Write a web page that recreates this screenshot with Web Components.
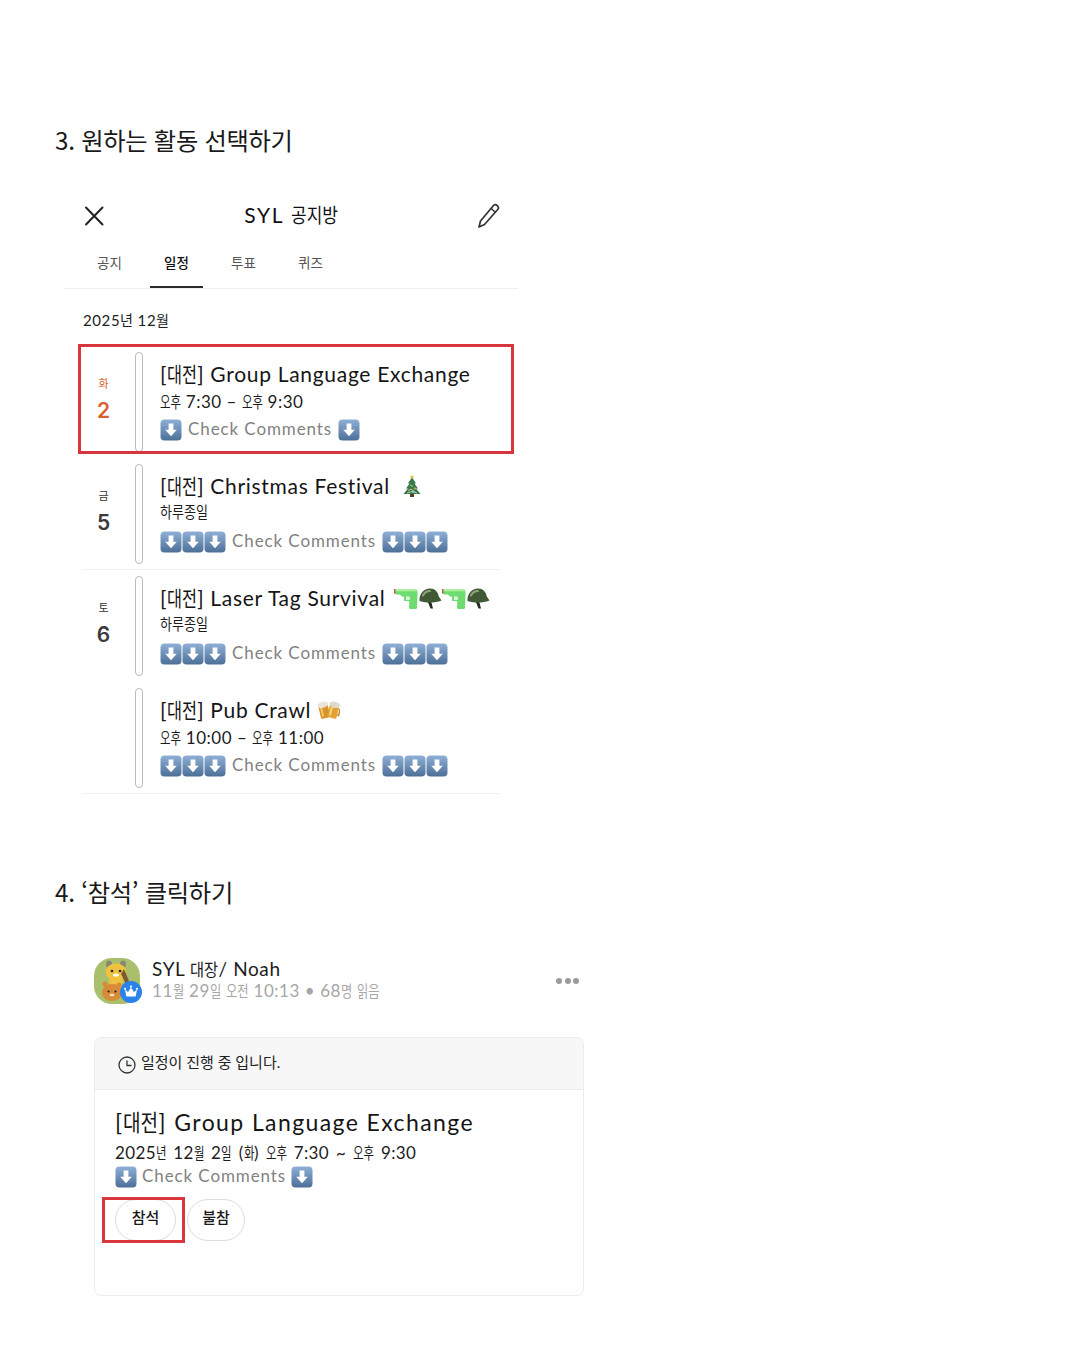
<!DOCTYPE html>
<html lang="ko">
<head>
<meta charset="utf-8">
<title>SYL</title>
<style>
  html, body { margin: 0; background: #fff; }
  body { font-family: "Noto Sans CJK KR", "Noto Sans", sans-serif; color: #111; }
  main { display: block; padding-top: 126px; height: 1224px; overflow: hidden; }
</style>
</head>
<body>
<main>
  <syl-heading>3. 원하는 활동 선택하기</syl-heading>
  <syl-screen title="SYL 공지방" month="2025년 12월">
    <syl-event weekday="화" day="2" accent highlight name="[대전] Group Language Exchange" time="오후 7:30 – 오후 9:30" arrows="1" divider="0"></syl-event>
    <syl-event weekday="금" day="5" name="[대전] Christmas Festival" icons="tree" icon-gap="11" time="하루종일" arrows="3" divider="1"></syl-event>
    <syl-event weekday="토" day="6" name="[대전] Laser Tag Survival" icons="gun,helmet,gun,helmet" icon-gap="9" time="하루종일" arrows="3" divider="0"></syl-event>
    <syl-event name="[대전] Pub Crawl" icons="beer" icon-gap="7" time="오후 10:00 – 오후 11:00" arrows="3" divider="1"></syl-event>
  </syl-screen>
  <syl-heading style="margin-top:84px">4. ‘참석’ 클릭하기</syl-heading>
  <syl-post author="SYL 대장/ Noah" meta="11월 29일 오전 10:13 • 68명 읽음">
    <syl-schedule-card status="일정이 진행 중 입니다." name="[대전] Group Language Exchange" when="2025년 12월 2일 (화) 오후 7:30 ~ 오후 9:30"></syl-schedule-card>
  </syl-post>
</main>

<script>
// the original's hand-drawn hangul is tall and narrow, so squeeze each run
function hg(text, scale, size) {
  return text.replace(/[가-힣]+/g, m =>
    `<span style="display:inline-block;font-size:${size}px;letter-spacing:0;transform:scaleX(${scale});transform-origin:0 50%;margin-right:${(-(1 - scale) * .92 * m.length).toFixed(3)}em">${m}</span>`);
}

// emoji drawn by hand, the sandbox has no colour emoji font
const EMOJI = {
  arrow: `<svg viewBox="0 0 22 22" width="22" height="22"><defs><linearGradient id="a" x1="0" y1="0" x2="0" y2="1"><stop offset="0" stop-color="#8fb0d6"/><stop offset="1" stop-color="#4c6f98"/></linearGradient></defs><rect x=".5" y=".5" width="21" height="21" rx="4" fill="url(#a)"/><path d="M8.600 4.500h4.800v6.200h3.400L11 17.200 5.200 10.700h3.400z" fill="#fff"/></svg>`,
  tree: `<svg viewBox="0 0 22 24" width="22" height="24"><rect x="9" y="19" width="4" height="4" fill="#5b3d22"/><path d="M11 3 15 9.500h-1.600L17 14.500h-2L19.500 20h-17L7 14.500H5L8.600 9.500H7z" fill="#3a7a48"/><path d="M7 17l3-2 4 3M9 11l3 1.500M6 19l5-1.500 5 1.500" stroke="#a9d0ac" fill="none"/><circle cx="11" cy="2.800" r="1.600" fill="#e7c64a"/><circle cx="8" cy="16" r=".9" fill="#e86a5c"/><circle cx="14" cy="14.500" r=".9" fill="#e7c64a"/><circle cx="12" cy="18" r=".9" fill="#8ec6e8"/></svg>`,
  gun: `<svg viewBox="0 0 24 24" width="24" height="24"><rect x="0" y="3" width="2" height="4.500" fill="#b5583a"/><path d="M1.500 3H21c1.800 0 2.500 1 2.500 2.500v2.500l-.5 13.500c0 .8-.5 1.500-1.500 1.500h-5c-1 0-1.500-.7-1.500-1.500l.3-6.500h-4c-1 0-1.500-.8-1.500-1.800V10.500H8L6 8.500H1.500z" fill="#6fdc6f"/><path d="M1.500 3H21c1.500 0 2.300.8 2.500 2.200H1.500z" fill="#aaf0a0"/><path d="M12 10.500h3.800V14H12z" fill="#fff" opacity=".75"/></svg>`,
  helmet: `<svg viewBox="0 0 24 24" width="24" height="24"><path d="M9.500 15l3 7.500h2.500L13 15z" fill="#26261f"/><path d="M1.500 15C1 7.500 6 2.500 12 2.500c5 0 8 3.500 8.800 8l2.700 4c-6.500 2.500-14 2.800-22 .5z" fill="#3f5a34"/><path d="M5 9.500c1.500-3 4-4.500 7-4.500" stroke="#8ea37a" stroke-width="2" fill="none" stroke-linecap="round"/></svg>`,
  beer: `<svg viewBox="0 0 22 22" width="22" height="22"><g transform="rotate(-14 7 12)"><rect x="1.500" y="6" width="9.500" height="13" rx="1.500" fill="#d9932b"/><rect x="3" y="8" width="2" height="9" fill="#f4c96a"/><ellipse cx="6.200" cy="5.500" rx="5.500" ry="3" fill="#e9e4d8"/></g><g transform="rotate(14 15 12)"><rect x="10.500" y="6" width="9.500" height="13" rx="1.500" fill="#e3a233"/><rect x="12" y="8" width="2" height="9" fill="#f8d680"/><path d="M20 9h1.500v6H20" fill="none" stroke="#c98a2a" stroke-width="1.500"/><ellipse cx="15.200" cy="5.500" rx="5.500" ry="3" fill="#e0dacb"/></g></svg>`
};

class SylHeading extends HTMLElement {
  connectedCallback() {
    this.attachShadow({ mode: 'open' }).innerHTML = `
      <style>
        :host { display: block; padding: 0 0 2px 55px; font-size: 24.3px; line-height: 28px; color: #1a1a1a; letter-spacing: -.3px; }
      </style><slot></slot>`;
  }
}

class SylEmoji extends HTMLElement {
  connectedCallback() {
    const name = this.getAttribute('name') || 'arrow';
    this.attachShadow({ mode: 'open' }).innerHTML = `
      <style>:host { display: inline-flex; flex: none; } svg { display: block; }</style>${EMOJI[name]}`;
  }
}

// row of down arrows with "Check Comments" between them
class SylComments extends HTMLElement {
  connectedCallback() {
    const n = +this.getAttribute('count') || 1;
    const arrows = '<syl-emoji name="arrow"></syl-emoji>'.repeat(n);
    this.attachShadow({ mode: 'open' }).innerHTML = `
      <style>
        :host { display: flex; align-items: center; height: 22px; }
        .text { margin: -2px 6px 0 6px; font: 400 17px/22px Lato, "Noto Sans", sans-serif; color: #828282; width: 144px; white-space: nowrap; letter-spacing: .9px; }
        :host([tight]) .text { margin-left: 5px; margin-right: 5px; }
      </style>${arrows}<span class="text">Check Comments</span>${arrows}`;
  }
}

class SylScreen extends HTMLElement {
  connectedCallback() {
    const title = this.getAttribute('title');
    const month = this.getAttribute('month');
    const tabs = ['공지', '일정', '투표', '퀴즈'];
    this.attachShadow({ mode: 'open' }).innerHTML = `
      <style>
        :host { display: block; margin: 41px 0 0 64px; width: 454px; }
        header { height: 38px; display: flex; align-items: center; justify-content: space-between; padding: 0 17px 0 20px; position: relative; }
        header svg { display: block; }
        h1 { position: absolute; left: 0; right: 0; top: 0; margin: 0; text-align: center; font: 400 21px/35px Lato, "Noto Sans CJK KR", sans-serif; color: #111; letter-spacing: 1.7px; }
        nav { display: flex; height: 53px; padding-left: 12px; border-bottom: 1px solid #eee; }
        nav span { width: 67px; text-align: center; font-size: 13.5px; line-height: 54px; color: #555; position: relative; }
        nav span.on { color: #111; font-weight: 500; }
        nav span.on::after { content: ''; position: absolute; left: 7px; right: 7px; bottom: 0; height: 2px; background: #2a2a2a; }
        .month { height: 57px; padding-left: 19px; font: 400 15px/62px Lato, "Noto Sans CJK KR", sans-serif; letter-spacing: .6px; color: #222; }
        .rows { margin-left: 18px; width: 418px; }
      </style>
      <header>
        <svg width="20" height="20" viewBox="0 0 20 20"><path d="M2 1.500 18.500 18.500M18.500 1.500 2 18.500" stroke="#222" stroke-width="2" stroke-linecap="round"/></svg>
        <h1>${hg(title, .85, 20)}</h1>
        <svg width="24" height="26" viewBox="0 0 24 26"><path d="M16.500 2.500c1-1 2.500-1 3.800.200 1.300 1.300 1.400 2.800.400 3.800L7.500 21.500 2 24l1.500-6z" fill="none" stroke="#333" stroke-width="1.700" stroke-linejoin="round"/><path d="M14 5.200l4.500 4.300" stroke="#333" stroke-width="1.400"/></svg>
      </header>
      <nav>${tabs.map((t, i) => `<span class="${i === 1 ? 'on' : ''}">${t}</span>`).join('')}</nav>
      <div class="month">${hg(month, .97, 14.5)}</div>
      <div class="rows"><slot></slot></div>`;
  }
}

class SylEvent extends HTMLElement {
  connectedCallback() {
    const get = n => this.getAttribute(n) || '';
    const icons = get('icons') ? get('icons').split(',') : [];
    const iconHtml = icons.map(n => `<syl-emoji name="${n}"></syl-emoji>`).join('');
    const time = get('time');
    const hasClock = /\d/.test(time);
    this.attachShadow({ mode: 'open' }).innerHTML = `
      <style>
        :host { display: flex; height: 112px; box-sizing: border-box; position: relative; }
        :host([divider="1"]) { border-bottom: 1px solid #f0f0f0; }
        .date { width: 43px; margin-top: 30px; text-align: center; }
        .wd { font-size: 11px; line-height: 14px; color: #333; }
        .num { font: 600 21px/26px Inter, "Liberation Sans", sans-serif; color: #3a3a3a; margin-top: 8px; }
        :host([accent]) .wd, :host([accent]) .num { color: #d9622f; }
        .bar { width: 6px; height: 98px; margin: 6px 17px 0 10px; border: 1px solid #b9b9b9; border-radius: 4px; background: #fff; flex: none; }
        .body { padding-top: 14px; min-width: 0; }
        .name { display: flex; align-items: center; height: 28px; font: 400 21px/28px Lato, "Noto Sans CJK KR", sans-serif; color: #151515; letter-spacing: .7px; white-space: pre; }
        .icons { display: flex; margin-left: ${get('icon-gap') || 8}px; }
        .time { margin: 3px 0 0; font: 400 17px/22px Lato, "Noto Sans CJK KR", sans-serif; letter-spacing: .5px; color: #1c1c1c; }
        .time.allday { margin-top: 1px; padding-bottom: 2px; }
        syl-comments { margin-top: 6px; }
        .box { position: absolute; left: -4px; top: -2px; width: 436px; height: 110px; box-sizing: border-box; border: 3px solid #d8353c; display: none; pointer-events: none; }
        :host([highlight]) .box { display: block; }
      </style>
      <div class="date"><div class="wd">${get('weekday')}</div><div class="num">${get('day')}</div></div>
      <div class="bar"></div>
      <div class="body">
        <div class="name"><span>${hg(get('name'), .776, 21)}</span>${icons.length ? `<span class="icons">${iconHtml}</span>` : ''}</div>
        <div class="time ${hasClock ? '' : 'allday'}">${hg(time, hasClock ? .736 : .84, 15.5)}</div>
        <syl-comments count="${get('arrows')}"></syl-comments>
      </div>
      <div class="box"></div>`;
  }
}

class SylPost extends HTMLElement {
  connectedCallback() {
    this.attachShadow({ mode: 'open' }).innerHTML = `
      <style>
        :host { display: block; margin: 50px 0 0 94px; width: 490px; }
        .top { display: flex; height: 46px; position: relative; }
        .avatar { width: 46px; height: 46px; flex: none; position: relative; margin-right: 12px; }
        svg { display: block; }
        .badge { position: absolute; left: 26px; top: 23px; }
        .who { font: 400 19px/22px Lato, "Noto Sans CJK KR", sans-serif; letter-spacing: .6px; color: #1c1c1c; }
        .meta { font: 400 17px/22px Lato, "Noto Sans CJK KR", sans-serif; letter-spacing: .55px; color: #a6a6a6; margin-top: -1px; }
        .dots { margin-left: auto; margin-right: 5px; align-self: center; display: flex; gap: 2.500px; }
        .dots i { width: 6px; height: 6px; border-radius: 50%; background: #9b9b9b; }
        .slot { display: block; margin-top: 33px; }
      </style>
      <div class="top">
        <div class="avatar">
          <svg width="46" height="46" viewBox="0 0 46 46">
            <rect width="46" height="46" rx="18" fill="#a9bf6c"/>
            <ellipse cx="15" cy="6" rx="3" ry="3.500" fill="#8a8672"/><ellipse cx="29" cy="6" rx="3" ry="3.500" fill="#8a8672"/>
            <ellipse cx="22" cy="14" rx="10.500" ry="8.500" fill="#efc33f"/>
            <path d="M15 21c3-2 11-2 14 1l-2 9H16z" fill="#efc33f"/>
            <path d="M30 11l5 12-3 3-5-10z" fill="#7b5a34"/>
            <circle cx="18" cy="13" r="1.300" fill="#222"/><circle cx="26" cy="13" r="1.300" fill="#222"/>
            <ellipse cx="22" cy="17" rx="3" ry="1.600" fill="#fff"/>
            <circle cx="11" cy="26" r="2.500" fill="#d88a37"/><circle cx="25" cy="27" r="2.500" fill="#d88a37"/>
            <ellipse cx="18" cy="34.500" rx="10" ry="8.500" fill="#d88a37"/>
            <circle cx="14.500" cy="33.500" r="1.100" fill="#222"/><circle cx="21.500" cy="33.500" r="1.100" fill="#222"/>
            <ellipse cx="18" cy="37" rx="2.500" ry="1.300" fill="#efe2c4"/>
          </svg>
          <svg class="badge" width="22" height="22" viewBox="0 0 22 22">
            <circle cx="11" cy="11" r="11" fill="#2b82ea"/>
            <path d="M5 8.500l3 2.500 3-4.500 3 4.500 3-2.500-1.300 7H6.300z" fill="#fff"/>
            <circle cx="5" cy="7.800" r="1.100" fill="#fff"/><circle cx="11" cy="5.600" r="1.100" fill="#fff"/><circle cx="17" cy="7.800" r="1.100" fill="#fff"/>
          </svg>
        </div>
        <div>
          <div class="who">${hg(this.getAttribute('author'), .9, 17)}</div>
          <div class="meta">${hg(this.getAttribute('meta'), .79, 15.5)}</div>
        </div>
        <div class="dots"><i></i><i></i><i></i></div>
      </div>
      <slot class="slot"></slot>`;
  }
}

class SylScheduleCard extends HTMLElement {
  connectedCallback() {
    this.attachShadow({ mode: 'open' }).innerHTML = `
      <style>
        :host { display: block; height: 259px; box-sizing: border-box; border: 1px solid #ececec; border-radius: 7px; overflow: hidden; }
        .status { height: 51px; background: #f7f7f7; border-bottom: 1px solid #eee; display: flex; align-items: center; padding-left: 23px; font: 400 15px/20px Lato, "Noto Sans CJK KR", sans-serif; color: #222; }
        .status svg { margin: 2px 5px 0 0; display: block; }
        .status span { margin-top: -3px; }
        .body { padding: 18px 0 0 20px; position: relative; }
        .name { font: 400 23px/28px Lato, "Noto Sans CJK KR", sans-serif; letter-spacing: 1.4px; color: #151515; white-space: pre; margin-bottom: 2px; }
        .when { margin-top: 6px; font: 400 17px/22px Lato, "Noto Sans CJK KR", sans-serif; letter-spacing: .35px; word-spacing: 2.2px; color: #1c1c1c; }
        syl-comments { margin-top: 2px; }
        .btns { display: flex; gap: 11px; margin-top: 11px; position: relative; }
        button { all: unset; height: 42px; padding-bottom: 6px; box-sizing: border-box; border: 1px solid #dcdcdc; border-radius: 21px; text-align: center; font-size: 15px; font-weight: 500; line-height: 20px; color: #1a1a1a; }
        .yes { width: 61px; } .no { width: 58px; }
        .box { position: absolute; left: -13px; top: -2px; width: 83px; height: 46px; box-sizing: border-box; border: 3px solid #d8353c; pointer-events: none; }
      </style>
      <div class="status">
        <svg width="18" height="18" viewBox="0 0 18 18"><circle cx="9" cy="9" r="8" fill="none" stroke="#333" stroke-width="1.300"/><path d="M9 4.500V9.500h4.500" fill="none" stroke="#333" stroke-width="1.300"/></svg>
        <span>${this.getAttribute('status')}</span>
      </div>
      <div class="body">
        <div class="name">${hg(this.getAttribute('name'), .83, 23)}</div>
        <div class="when">${hg(this.getAttribute('when'), .736, 15.5)}</div>
        <syl-comments count="1" tight></syl-comments>
        <div class="btns">
          <button class="yes">참석</button><button class="no">불참</button>
          <div class="box"></div>
        </div>
      </div>`;
  }
}

customElements.define('syl-heading', SylHeading);
customElements.define('syl-emoji', SylEmoji);
customElements.define('syl-comments', SylComments);
customElements.define('syl-screen', SylScreen);
customElements.define('syl-event', SylEvent);
customElements.define('syl-post', SylPost);
customElements.define('syl-schedule-card', SylScheduleCard);
</script>
</body>
</html>
